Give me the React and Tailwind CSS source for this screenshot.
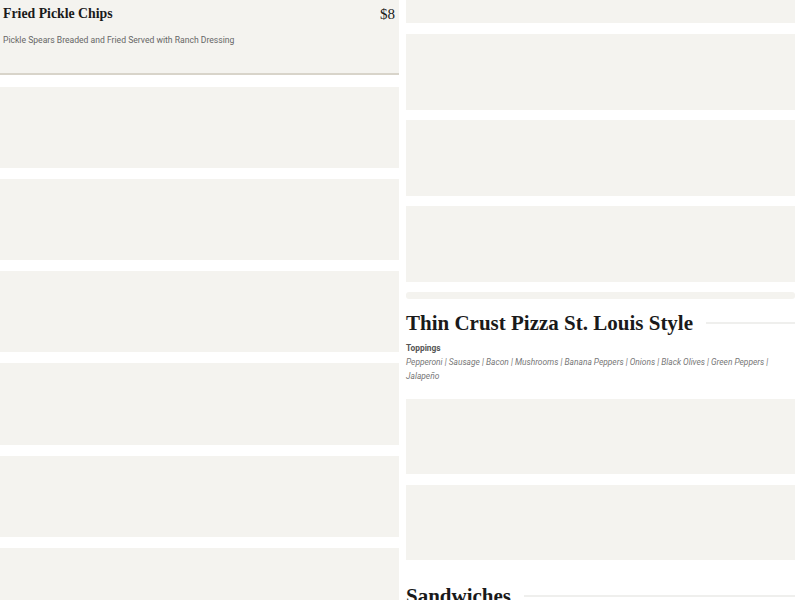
import React from 'react';

const serif = { fontFamily: '"Liberation Serif", "DejaVu Serif", serif' };

const Card = ({ className = '' }) => (
  <div className={`bg-[#f4f3ef] shrink-0 ${className}`} />
);

const SectionTitle = ({ title }) => (
  <div className="flex items-center gap-[13px]">
    <h2 className="text-[21px] leading-[30px] font-bold text-[#1a1a1a] whitespace-nowrap" style={serif}>
      {title}
    </h2>
    <div className="flex-1 h-[2px] bg-[#efefed]" />
  </div>
);

const App = () => {
  const toppings = 'Pepperoni | Sausage | Bacon | Mushrooms | Banana Peppers | Onions | Black Olives | Green Peppers | Jalapeño';

  return (
    <div className="w-[800px] h-[600px] overflow-hidden bg-white flex gap-[7px] pr-[5px] font-['Roboto',sans-serif]">
      <div className="w-[399px] flex flex-col gap-[12px] shrink-0">
        <div className="bg-[#f4f3ef] h-[75px] shrink-0 border-b-2 border-[#d8d4ca] px-[3px] pt-[4px]">
          <div className="flex justify-between items-start">
            <h3 className="text-[13.8px] leading-[20px] font-bold text-[#1a1a1a]" style={serif}>Fried Pickle Chips</h3>
            <span className="text-[15px] leading-[20px] text-[#1a1a1a] pr-[1px]" style={serif}>$8</span>
          </div>
          <p className="mt-[9px] text-[8.6px] leading-[14px] text-[#666]">
            Pickle Spears Breaded and Fried Served with Ranch Dressing
          </p>
        </div>
        <div className="flex flex-col gap-[11px] shrink-0">
          <Card className="h-[81px]" />
          <Card className="h-[81px]" />
          <Card className="h-[81px]" />
          <Card className="h-[82px]" />
          <Card className="h-[81px]" />
          <Card className="h-[81px]" />
        </div>
      </div>

      <div className="flex-1 flex flex-col">
        <Card className="h-[23px]" />
        <div className="flex flex-col gap-[10px] mt-[11px] shrink-0">
          <Card className="h-[76px]" />
          <Card className="h-[76px]" />
          <Card className="h-[76px]" />
          <Card className="h-[7px] rounded-[3px]" />
        </div>
        <div className="mt-[9px] shrink-0">
          <SectionTitle title="Thin Crust Pizza St. Louis Style" />
        </div>
        <div className="mt-[3px] text-[8.4px] leading-[14px] shrink-0">
          <div className="font-bold text-[#555]">Toppings</div>
          <p className="italic text-[#777]">{toppings}</p>
        </div>
        <div className="flex flex-col gap-[11px] mt-[16px] shrink-0">
          <Card className="h-[75px]" />
          <Card className="h-[75px]" />
        </div>
        <div className="mt-[21px] shrink-0">
          <SectionTitle title="Sandwiches" />
        </div>
      </div>
    </div>
  );
};

export default App;
